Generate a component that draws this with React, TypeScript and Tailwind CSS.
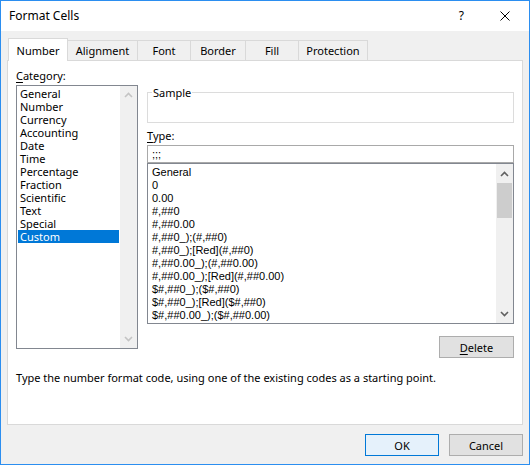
import React from "react";

const categories = [
  "General",
  "Number",
  "Currency",
  "Accounting",
  "Date",
  "Time",
  "Percentage",
  "Fraction",
  "Scientific",
  "Text",
  "Special",
  "Custom",
];

const codes = [
  "General",
  "0",
  "0.00",
  "#,##0",
  "#,##0.00",
  "#,##0_);(#,##0)",
  "#,##0_);[Red](#,##0)",
  "#,##0.00_);(#,##0.00)",
  "#,##0.00_);[Red](#,##0.00)",
  "$#,##0_);($#,##0)",
  "$#,##0_);[Red]($#,##0)",
  "$#,##0.00_);($#,##0.00)",
];

const tabs = [
  { label: "Alignment", w: "w-[70px]" },
  { label: "Font", w: "w-[53px]" },
  { label: "Border", w: "w-[55px]" },
  { label: "Fill", w: "w-[53px]" },
  { label: "Protection", w: "w-[69px]" },
];

function Chevron({ up, color }: { up?: boolean; color: string }) {
  return (
    <svg width="9" height="6" viewBox="0 0 9 6">
      <polyline
        points={up ? "1,5 4.5,1.5 8,5" : "1,1 4.5,4.5 8,1"}
        fill="none"
        stroke={color}
        strokeWidth="1.6"
      />
    </svg>
  );
}

export default function App() {
  return (
    <div className="w-[530px] h-[465px] border border-[#2b8ef0] bg-[#f0f0f0] flex flex-col font-['Noto_Sans',sans-serif] text-[11px] text-black leading-none">
      {/* Title bar */}
      <div className="h-[30px] bg-white flex items-center shrink-0">
        <span className="ml-[8px] text-[12px]">Format Cells</span>
        <span className="ml-auto text-[12px]">?</span>
        <svg className="ml-[36px] mr-[19px]" width="10" height="10" viewBox="0 0 10 10">
          <path d="M0.5 0.5 L9.5 9.5 M9.5 0.5 L0.5 9.5" stroke="#000" strokeWidth="1" />
        </svg>
      </div>

      <div className="flex flex-col px-[6px]">
        {/* Tabs */}
        <div className="flex items-end h-[22px] pl-[1px] mt-[7px]">
          <div className="relative z-10 -mb-px h-[23px] w-[60px] bg-white border border-b-0 border-[#d9d9d9] flex items-center justify-center">
            Number
          </div>
          {tabs.map((t) => (
            <div
              key={t.label}
              className={`${t.w} h-[20px] border-t border-r border-[#d9d9d9] flex items-center justify-center`}
            >
              {t.label}
            </div>
          ))}
        </div>

        {/* Panel */}
        <div className="h-[365px] bg-white border border-[#d9d9d9] pt-[7px] px-[8px] flex flex-col">
          <div className="grid grid-cols-[122px_367px] gap-x-[9px]">
            {/* Left column */}
            <div className="flex flex-col">
              <div className="h-[16px] leading-[16px]">
                <span className="underline underline-offset-[2px]">C</span>ategory:
              </div>
              <div className="mt-[1px] h-[264px] border border-[#828790] flex">
                <div className="flex-1 px-[1px] pt-[1px] flex flex-col">
                  {categories.map((c) => (
                    <div
                      key={c}
                      className={`h-[13px] leading-[13px] pl-[2px] ${
                        c === "Custom" ? "bg-[#0078d7] text-white" : ""
                      }`}
                    >
                      {c}
                    </div>
                  ))}
                </div>
                <div className="w-[17px] bg-[#f0f0f0] flex flex-col justify-between items-center py-[6px]">
                  <Chevron up color="#c4c4c4" />
                  <Chevron color="#c4c4c4" />
                </div>
              </div>
            </div>

            {/* Right column */}
            <div className="flex flex-col mt-[17px]">
              <fieldset className="h-[38px] border border-[#dcdcdc]">
                <legend className="ml-[4px] px-[1px] leading-[15px]">Sample</legend>
              </fieldset>
              <div className="mt-[5px] h-[16px] leading-[16px]">
                <span className="underline underline-offset-[2px]">T</span>ype:
              </div>
              <div className="mt-[1px] h-[18px] border border-[#a9a9a9] flex items-center pl-[4px] font-['Liberation_Sans',sans-serif] text-[11px]">
                ;;;
              </div>
              <div className="h-[161px] border border-[#828790] flex">
                <div className="flex-1 pt-[2px] pl-[4px] font-['Liberation_Sans',sans-serif] text-[11px]">
                  {codes.map((c) => (
                    <div key={c} className="h-[13px] leading-[13px] whitespace-pre">
                      {c}
                    </div>
                  ))}
                </div>
                <div className="w-[17px] bg-[#f0f0f0] flex flex-col items-center">
                  <div className="h-[19px] w-full flex items-center justify-center">
                    <Chevron up color="#606060" />
                  </div>
                  <div className="h-[35px] w-[15px] bg-[#cdcdcd]" />
                  <div className="flex-1" />
                  <div className="h-[19px] w-full flex items-center justify-center">
                    <Chevron color="#606060" />
                  </div>
                </div>
              </div>
              <div className="flex justify-end mt-[12px]">
                <div className="w-[75px] h-[22px] bg-[#e1e1e1] border border-[#adadad] flex items-center justify-center">
                  <span>
                    <span className="underline underline-offset-[2px]">D</span>elete
                  </span>
                </div>
              </div>
            </div>
          </div>
          <div className="mt-[12px] h-[16px] leading-[16px]">
            Type the number format code, using one of the existing codes as a starting point.
          </div>
        </div>

        {/* Buttons */}
        <div className="flex justify-end gap-[10px] mt-[9px]">
          <div className="w-[74px] h-[22px] bg-[#e5f1fb] border border-[#0078d7] flex items-center justify-center">
            OK
          </div>
          <div className="w-[74px] h-[22px] bg-[#e1e1e1] border border-[#adadad] flex items-center justify-center">
            Cancel
          </div>
        </div>
      </div>
    </div>
  );
}
